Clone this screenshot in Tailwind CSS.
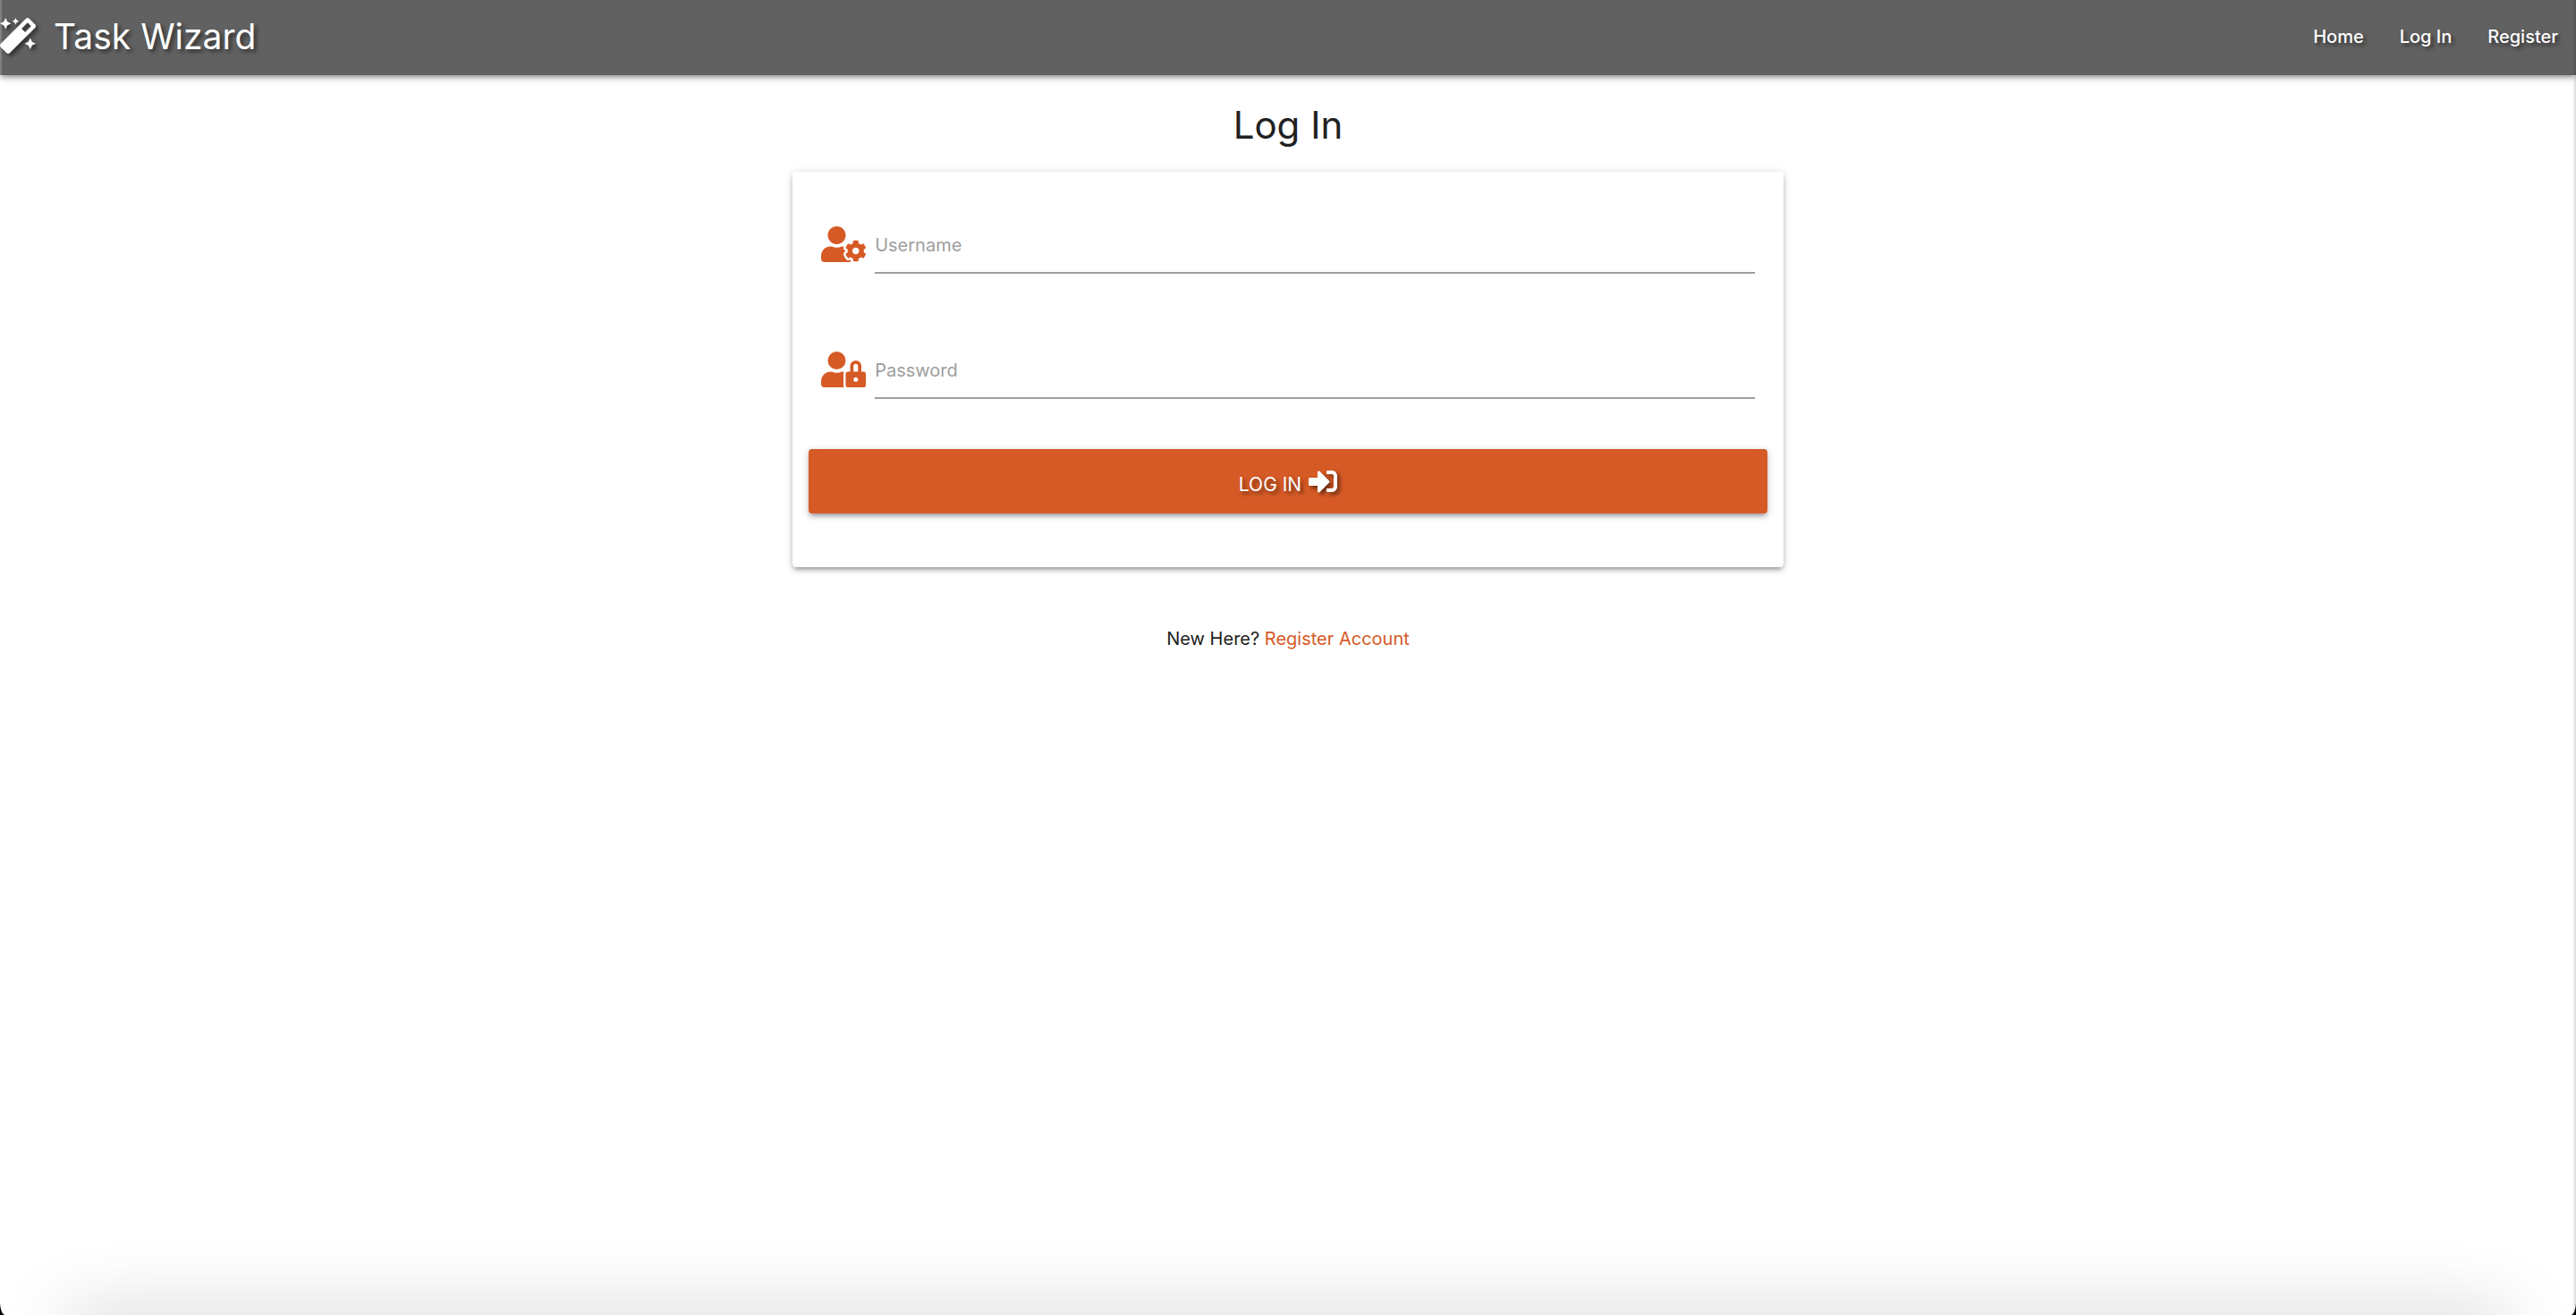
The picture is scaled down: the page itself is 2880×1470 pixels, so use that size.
<!DOCTYPE html>
<html lang="en">
<head>
<meta charset="utf-8">
<meta name="viewport" content="width=device-width, initial-scale=1">
<title>Task Wizard - Log In</title>
<script src="https://cdn.jsdelivr.net/npm/@tailwindcss/browser@4"></script>
</head>
<body class="bg-black">
<div class="relative flex min-h-screen flex-col overflow-hidden [border-radius:0_0_6px_6px/0_0_14px_14px] bg-white font-['Inter',sans-serif] text-xl leading-8 text-[#212121]">
  <header class="bg-[#616161] text-white shadow-[0_4px_4px_0_rgba(0,0,0,0.14),0_6px_2px_-4px_rgba(0,0,0,0.12),0_2px_10px_0_rgba(0,0,0,0.2)]">
    <nav class="flex h-21 items-start justify-between border-l-2 border-white/20 pr-5 [text-shadow:3px_3px_4px_rgba(0,0,0,0.5)]">
      <a href="#" class="-ml-0.5 flex h-20 items-center gap-5 text-[39px] leading-[60px]">
        <svg class="size-10 drop-shadow-[3px_3px_2px_rgba(0,0,0,0.5)]" viewBox="0 0 512 512" fill="currentColor" aria-hidden="true"><path d="M224 96l16-32 32-16-32-16-16-32-16 32-32 16 32 16 16 32zM80 160l26.66-53.33L160 80l-53.34-26.67L80 0 53.34 53.33 0 80l53.34 26.67L80 160zm352 128l-26.66 53.33L352 368l53.34 26.67L432 448l26.66-53.33L512 368l-53.34-26.67L432 288zm70.62-193.77L417.77 9.38C411.53 3.12 403.34 0 395.15 0c-8.19 0-16.38 3.12-22.63 9.38L9.38 372.52c-12.5 12.5-12.5 32.76 0 45.25l84.85 84.85c6.25 6.25 14.44 9.37 22.62 9.37 8.19 0 16.38-3.12 22.63-9.37l363.14-363.15c12.5-12.48 12.5-32.75 0-45.24zM359.45 203.46l-50.91-50.91 86.6-86.6 50.91 50.91-86.6 86.6z"/></svg>
        <span class="pt-0.5">Task Wizard</span>
      </a>
      <ul class="flex h-[82px] items-center gap-10 font-medium">
        <li><a href="#">Home</a></li>
        <li><a href="#">Log In</a></li>
        <li><a href="#">Register</a></li>
      </ul>
    </nav>
  </header>

  <main class="mx-auto w-5/13 pt-7">
    <h1 class="text-center text-[42px] leading-[56px]">Log In</h1>
    <form class="mt-6 rounded-sm bg-white px-[18px] pt-14 pb-15 shadow-[0_4px_4px_0_rgba(0,0,0,0.14),0_6px_2px_-4px_rgba(0,0,0,0.12),0_2px_10px_0_rgba(0,0,0,0.2)]">
      <div class="flex items-start gap-2.5 px-3.5">
        <label for="username" class="pt-[5px] text-[#d65a26]" aria-label="Username">
          <svg class="h-10 w-[50px]" viewBox="0 0 640 512" fill="currentColor" aria-hidden="true"><path d="M610.5 373.3c2.6-14.1 2.6-28.5 0-42.6l25.8-14.9c3-1.7 4.3-5.2 3.3-8.5-6.7-21.6-18.2-41.2-33.2-57.4-2.3-2.5-6-3.1-9-1.4l-25.8 14.9c-10.9-9.3-23.4-16.5-36.9-21.3v-29.8c0-3.4-2.4-6.4-5.7-7.1-22.3-5-45-4.8-66.2 0-3.3.7-5.7 3.7-5.7 7.1v29.8c-13.5 4.8-26 12-36.9 21.3l-25.8-14.9c-2.9-1.7-6.7-1.1-9 1.4-15 16.2-26.5 35.8-33.2 57.4-1 3.3.4 6.8 3.3 8.5l25.8 14.9c-2.6 14.1-2.6 28.5 0 42.6l-25.8 14.9c-3 1.7-4.3 5.2-3.3 8.5 6.7 21.6 18.2 41.1 33.2 57.4 2.3 2.5 6 3.1 9 1.4l25.8-14.9c10.9 9.3 23.4 16.5 36.9 21.3v29.8c0 3.4 2.4 6.4 5.7 7.1 22.3 5 45 4.8 66.2 0 3.3-.7 5.7-3.7 5.7-7.1v-29.8c13.5-4.8 26-12 36.9-21.3l25.8 14.9c2.9 1.7 6.7 1.1 9-1.4 15-16.2 26.5-35.8 33.2-57.4 1-3.3-.4-6.8-3.3-8.5l-25.8-14.9zM496 400.5c-26.8 0-48.5-21.8-48.5-48.5s21.8-48.5 48.5-48.5 48.5 21.8 48.5 48.5-21.7 48.5-48.5 48.5zM224 256c70.7 0 128-57.3 128-128S294.7 0 224 0 96 57.3 96 128s57.3 128 128 128zm201.2 226.5c-2.3-1.2-4.6-2.6-6.8-3.9l-7.9 4.6c-6 3.4-12.8 5.3-19.6 5.3-10.9 0-21.4-4.6-28.9-12.6-18.3-19.8-32.3-43.9-40.2-69.6-5.5-17.7 1.9-36.4 17.9-45.7l7.9-4.6c-.1-2.6-.1-5.2 0-7.8l-7.9-4.6c-16-9.2-23.4-28-17.9-45.7.9-2.9 2.2-5.8 3.2-8.7-3.8-.3-7.5-1.2-11.4-1.2h-16.7c-22.2 10.2-46.9 16-72.9 16s-50.6-5.8-72.9-16h-16.7C60.2 288 0 348.2 0 422.4V464c0 26.5 21.5 48 48 48h352c10.1 0 19.5-3.2 27.2-8.5-1.2-3.8-2-7.7-2-11.8v-9.2z"/></svg>
        </label>
        <input id="username" type="text" placeholder="Username" class="h-[58px] min-w-0 flex-1 border-b-2 border-[#9e9e9e] bg-transparent pb-1 outline-none placeholder:text-[#9e9e9e]">
      </div>
      <div class="mt-[82px] flex items-start gap-2.5 px-3.5">
        <label for="password" class="pt-[5px] text-[#d65a26]" aria-label="Password">
          <svg class="h-10 w-[50px]" viewBox="0 0 640 512" fill="currentColor" aria-hidden="true"><path d="M224 256A128 128 0 1 0 96 128a128 128 0 0 0 128 128zm96 64a63.08 63.08 0 0 1 8.1-30.5c-4.8-.5-9.5-1.5-14.5-1.5h-16.7a174.08 174.08 0 0 1-145.8 0h-16.7A134.43 134.43 0 0 0 0 422.4V464a48 48 0 0 0 48 48h280.9a63.54 63.54 0 0 1-8.9-32zm288-32h-32v-80a80 80 0 0 0-160 0v80h-32a32 32 0 0 0-32 32v160a32 32 0 0 0 32 32h224a32 32 0 0 0 32-32V320a32 32 0 0 0-32-32zM496 432a32 32 0 1 1 32-32 32 32 0 0 1-32 32zm32-144h-64v-80a32 32 0 0 1 64 0z"/></svg>
        </label>
        <input id="password" type="password" placeholder="Password" class="h-[58px] min-w-0 flex-1 border-b-2 border-[#9e9e9e] bg-transparent pb-1 outline-none placeholder:text-[#9e9e9e]">
      </div>
      <button type="submit" class="mt-14 flex h-18 w-full items-center justify-center gap-2 rounded-sm bg-[#d65a26] text-[21px] text-white uppercase shadow-[0_4px_4px_0_rgba(0,0,0,0.14),0_6px_2px_-4px_rgba(0,0,0,0.12),0_2px_10px_0_rgba(0,0,0,0.2)] [text-shadow:3px_3px_4px_rgba(0,0,0,0.5)]">
        <span class="pt-2">Log In</span>
        <svg class="size-8 drop-shadow-[3px_3px_2px_rgba(0,0,0,0.5)]" viewBox="0 0 512 512" fill="currentColor" aria-hidden="true"><path d="M416 448h-84c-6.6 0-12-5.4-12-12v-40c0-6.6 5.4-12 12-12h84c17.7 0 32-14.3 32-32V160c0-17.7-14.3-32-32-32h-84c-6.6 0-12-5.4-12-12V76c0-6.6 5.4-12 12-12h84c53 0 96 43 96 96v192c0 53-43 96-96 96zm-47-201L201 79c-15-15-41-4.5-41 17v96H24c-13.3 0-24 10.7-24 24v96c0 13.3 10.7 24 24 24h136v96c0 21.5 26 32 41 17l168-168c9.3-9.4 9.3-24.6 0-34z"/></svg>
      </button>
    </form>
    <p class="mt-16 text-center">New Here? <a href="#" class="text-[#d65a26]">Register Account</a></p>
  </main>
  <div class="pointer-events-none absolute inset-y-0 right-0 w-1 bg-linear-to-l from-black/15 to-transparent"></div>
  <div class="pointer-events-none absolute inset-x-24 bottom-0 h-0 shadow-[0_20px_80px_20px_rgba(0,0,0,0.22)]"></div>
</div>
</body>
</html>
